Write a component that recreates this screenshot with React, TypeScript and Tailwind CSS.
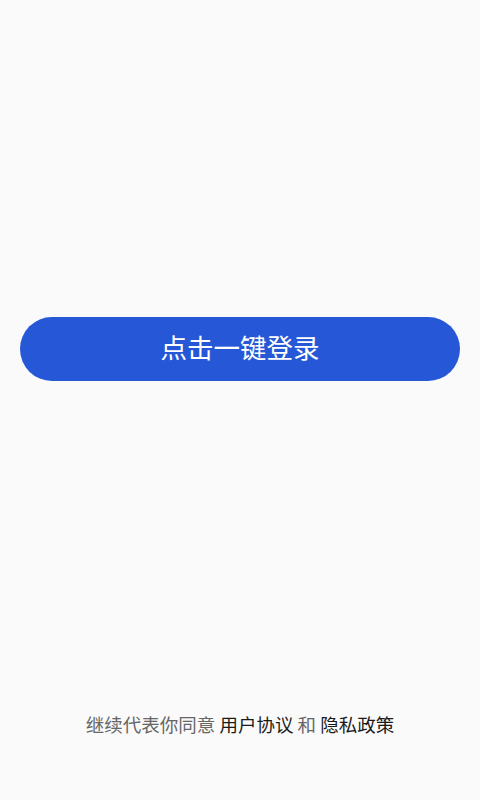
import React from "react";

const cjk = { fontFamily: '"Noto Sans CJK SC", "Noto Sans", sans-serif' };

export default function App() {
  return (
    <div className="flex h-[800px] w-full flex-col bg-[#fafafa]" style={cjk}>
      <div className="px-5 pt-[317px]">
        <button className="flex h-16 w-full items-center justify-center rounded-full bg-[#2557d6] pb-1 text-[26.5px] leading-none text-white">
          点击一键登录
        </button>
      </div>

      <div className="mt-auto pb-[64px] text-center text-[18.5px] leading-6 text-[#666666]">
        继续代表你同意 <span className="text-[#1a1a1a]">用户协议</span> 和{" "}
        <span className="text-[#1a1a1a]">隐私政策</span>
      </div>
    </div>
  );
}
